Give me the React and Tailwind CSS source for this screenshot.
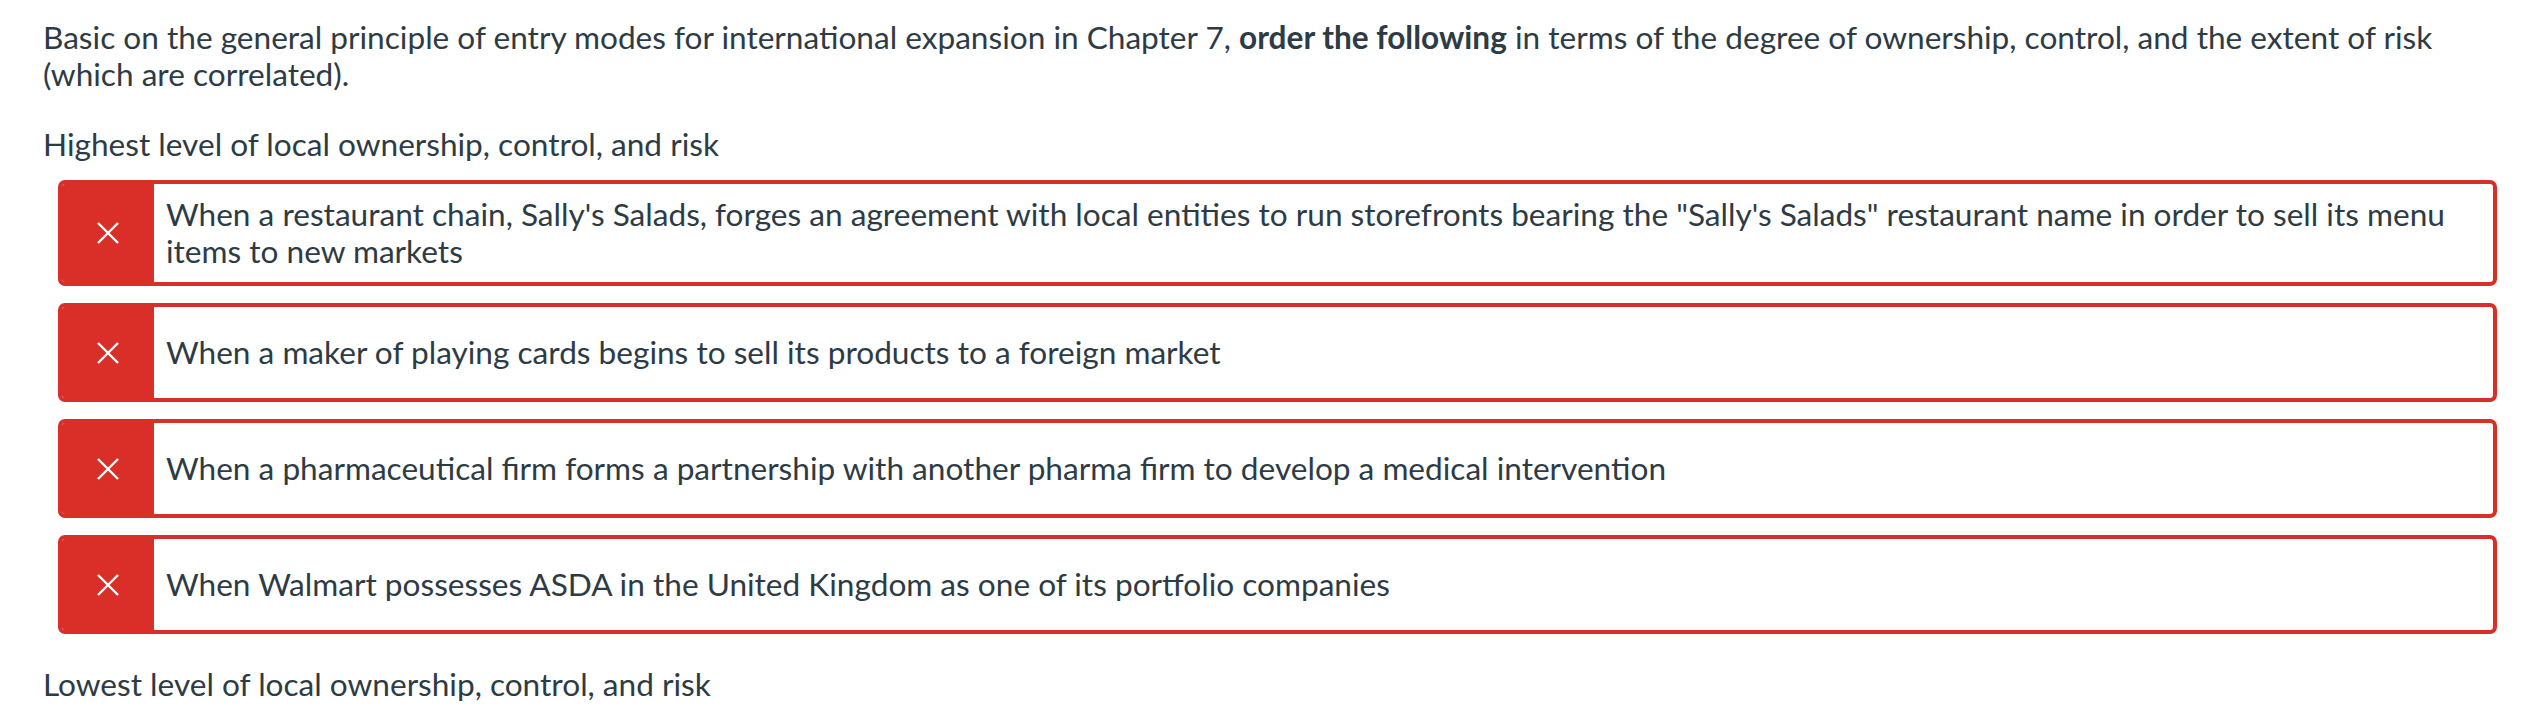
import React from 'react';

const items = [
  'When a restaurant chain, Sally\'s Salads, forges an agreement with local entities to run storefronts bearing the "Sally\'s Salads" restaurant name in order to sell its menu items to new markets',
  'When a maker of playing cards begins to sell its products to a foreign market',
  'When a pharmaceutical firm forms a partnership with another pharma firm to develop a medical intervention',
  'When Walmart possesses ASDA in the United Kingdom as one of its portfolio companies',
];

const CrossIcon = () => (
  <svg width="22" height="22" viewBox="0 0 22 22" fill="none">
    <path d="M1 1L21 21M21 1L1 21" stroke="white" strokeWidth="2.4" />
  </svg>
);

const AnswerRow = ({ text }) => (
  <div className="flex min-h-[99px] rounded-[7px] border-4 border-[#d92f28] bg-white overflow-hidden">
    {/* incorrect marker */}
    <div className="w-[92px] shrink-0 bg-[#d92f28] flex items-center justify-center">
      <CrossIcon />
    </div>
    <div className="flex-1 flex items-center px-[12px] py-[12px]">
      <p>{text}</p>
    </div>
  </div>
);

export default function App() {
  return (
    <div className="min-h-screen w-full bg-white pt-[19px] pl-[43px] pr-[27px] font-['Lato',sans-serif] text-[31.6px] leading-[37px] text-[#2d3b45]">
      <p>
        Basic on the general principle of entry modes for international expansion in Chapter 7,{' '}
        <strong className="font-bold">order the following</strong> in terms of the degree of ownership, control, and the
        extent of risk (which are correlated).
      </p>

      <p className="mt-[33px]">Highest level of local ownership, control, and risk</p>

      <div className="ml-[15px] mt-[17px] flex flex-col gap-[17px]">
        {items.map((t) => (
          <AnswerRow key={t} text={t} />
        ))}
      </div>

      <p className="mt-[32px]">Lowest level of local ownership, control, and risk</p>
    </div>
  );
}
